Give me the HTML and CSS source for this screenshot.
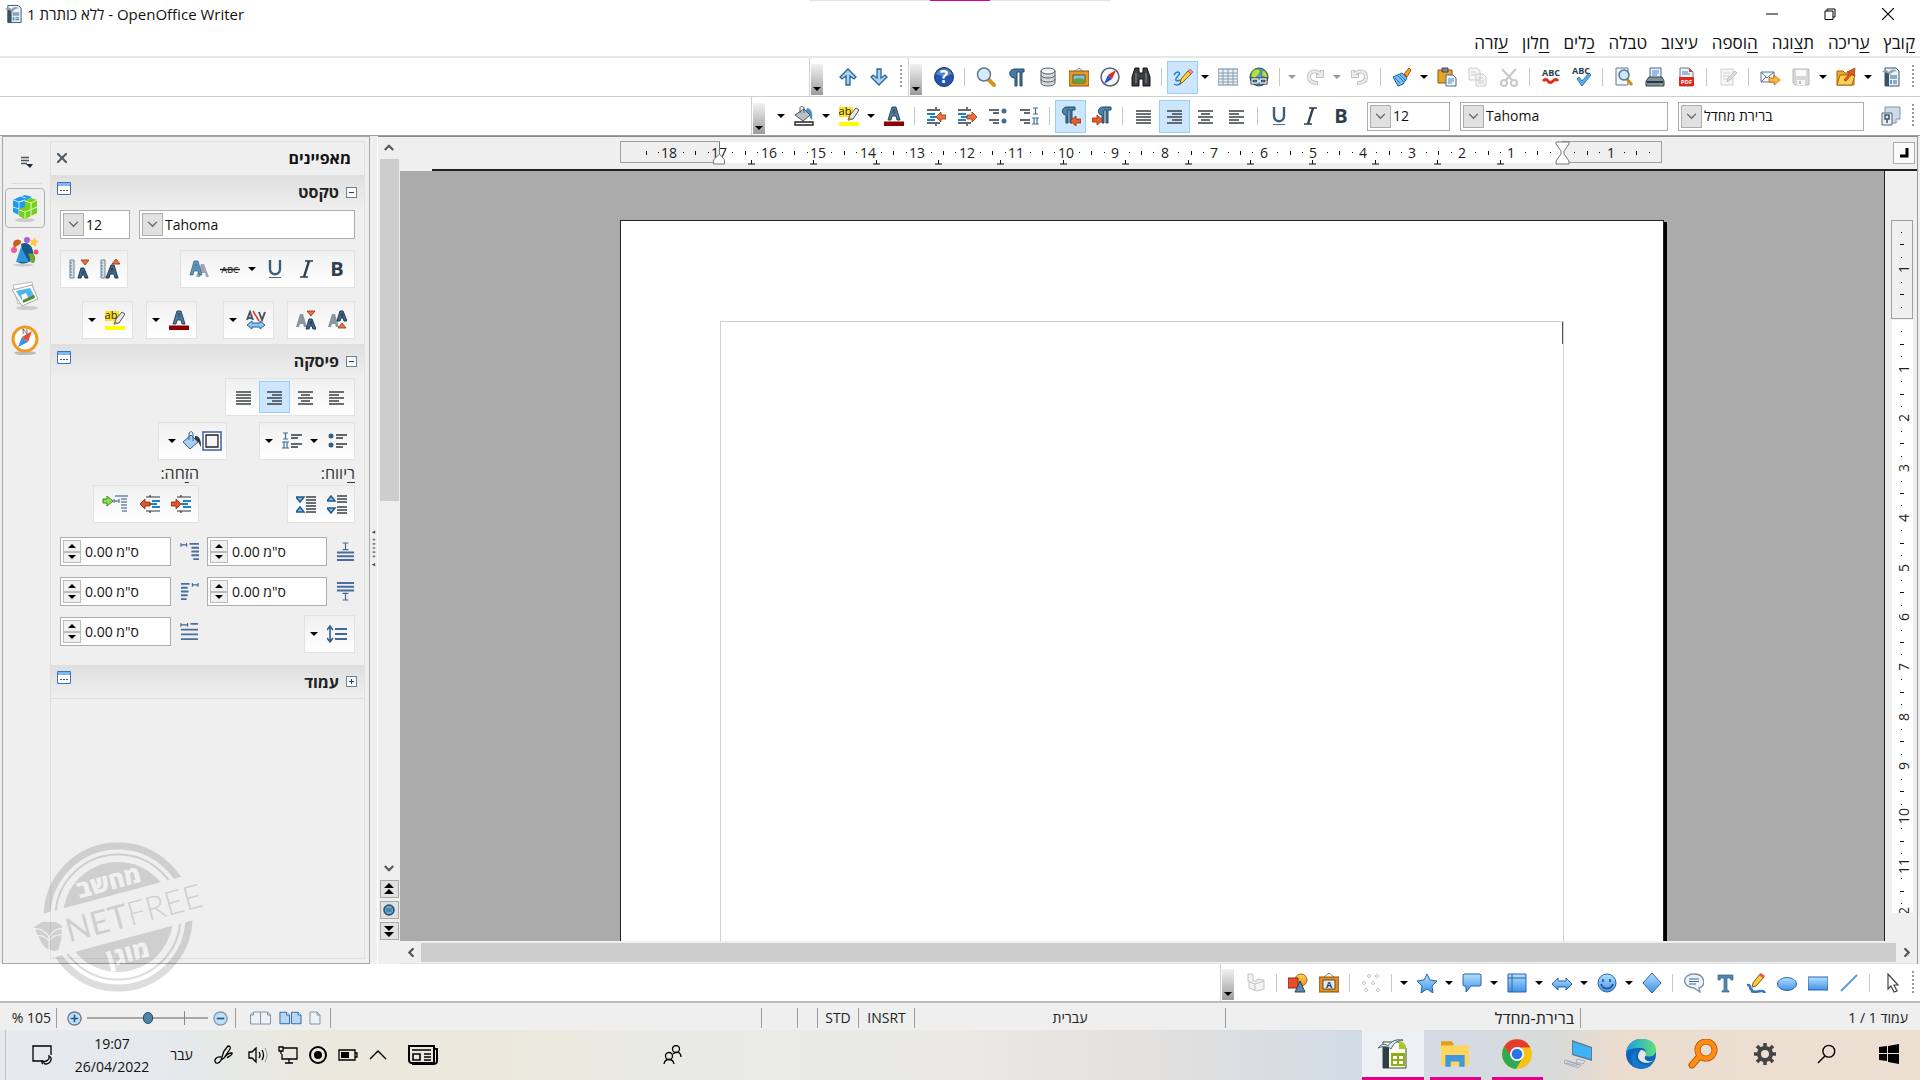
FILE: index.html
```html
<!DOCTYPE html>
<html lang="he" dir="rtl">

<head>
  <meta charset="UTF-8">
  <meta name="viewport" content="width=device-width, initial-scale=1.0">
  <title>ללא כותרת 1 - OpenOffice Writer</title>
  <link rel="stylesheet" href="styles.css">
</head>

<body>
  <!-- gradients stay out of the hidden sprite, they do not paint from there -->
  <svg class="gradients" width="0" height="0" aria-hidden="true">
    <defs>
      <linearGradient id="gBlue" x1="0" y1="0" x2="0" y2="1"><stop offset="0" stop-color="#b5e0ff"/><stop offset="1" stop-color="#3f93e6"/></linearGradient>
      <linearGradient id="gOrange" x1="0" y1="0" x2="0" y2="1"><stop offset="0" stop-color="#ffd45a"/><stop offset="1" stop-color="#e8901a"/></linearGradient>
      <linearGradient id="gEdge" x1="0" y1="0" x2="1" y2="0"><stop offset="0" stop-color="#1b9de2"/><stop offset="1" stop-color="#5fe07a"/></linearGradient>
    </defs>
  </svg>

  <!-- icon sprite -->
  <svg class="sprite" aria-hidden="true">
    <symbol id="writer" viewBox="0 0 20 20"><path d="M4 1h11l3 3v15H4z" fill="#eef3f7" stroke="#3a5266"/><path d="M4 5h4v14H4z" fill="#3a5266"/><path d="M1 5c3-3 5-2 7 0 2-3 5-3 8-1-3 0-5 1-7 4C7 6 4 5 1 5z" fill="#8fa5b5"/><path d="M9 9h7M9 11h7M12 14h4M12 16h4" stroke="#2f5f93"/><path d="M9 13h2v4H9z" fill="#5f9bd0"/></symbol>
    <symbol id="open" viewBox="0 0 20 20"><path d="M1 4h6l2 2h9v12H1z" fill="#f0a92b" stroke="#a8650c"/><path d="M1 18 4 8h15l-3 10z" fill="#ffd058" stroke="#a8650c"/><path d="M8 13l6-7-3-1 8-4-1 8-2-2-6 7z" fill="#e8591f" stroke="#9c2d08" stroke-width=".7"/></symbol>
    <symbol id="save" viewBox="0 0 20 20"><path d="M2 2h16v16H4l-2-2z" fill="#d7d7d7" stroke="#bbb"/><path d="M5 3h10v6H5zM6 13h8v5H6z" fill="#fafafa"/><path d="M8 14h2v3H8z" fill="#bbb"/></symbol>
    <symbol id="mail" viewBox="0 0 20 20"><path d="M1 5h13v10H1z" fill="#f3f6fa" stroke="#5d748a"/><path d="M1 5l6 6 7-6M1 15l5-5M14 15l-5-5" fill="none" stroke="#5d748a"/><path d="M9 11h5V8l6 5-6 5v-3H9z" fill="#ffb640" stroke="#b9660c" stroke-width=".8"/></symbol>
    <symbol id="edit" viewBox="0 0 20 20"><path d="M3 2h12v16H3z" fill="#f6f6f6" stroke="#d0d0d0"/><path d="M5 6h7M5 9h6M5 12h4" stroke="#d0d0d0"/><path d="M9 15l1-4 7-7 2 2-7 7z" fill="#dedede" stroke="#c0c0c0"/></symbol>
    <symbol id="pdf" viewBox="0 0 20 20"><path d="M4 1h9l4 4v14H4z" fill="#eaf1f7" stroke="#5f7d97"/><path d="M6 5h6M6 7h8" stroke="#4d84b5"/><path d="M13 1v4h4z" fill="#e23d2e"/><path d="M3 10h15v9H3z" fill="#e2261c"/><text x="10.500" y="17" class="i-pdf">PDF</text></symbol>
    <symbol id="print" viewBox="0 0 20 20"><path d="M5 1h11v10H5z" fill="#e6f1fb" stroke="#41648a"/><path d="M7 4h7M7 6h7M7 8h5" stroke="#4b8ad0"/><path d="M1 14l3-4h13l2 4v5H1z" fill="#82909c" stroke="#37424c"/><path d="M2 14h16v2H2z" fill="#2c3640"/><circle cx="16" cy="17.500" r="1" fill="#62e03c"/></symbol>
    <symbol id="preview" viewBox="0 0 20 20"><path d="M2 1h12v17H2z" fill="#f2f6fa" stroke="#5b7d9e"/><path d="M12 11l6 7" stroke="#c88a20" stroke-width="3"/><circle cx="10" cy="8" r="5" fill="#cde7fa" stroke="#56748d" stroke-width="1.500"/></symbol>
    <symbol id="abccheck" viewBox="0 0 20 20"><text x="9" y="7" class="i-abc">ABC</text><path d="M5 12l2-2 3 4 7-8 2 2-9 11z" fill="#57aef0" stroke="#1c5f9f" stroke-width=".8"/></symbol>
    <symbol id="abcwave" viewBox="0 0 20 20"><text x="10" y="9" class="i-abc">ABC</text><path d="M2 14q3-3 5 0t5 0 5 0" fill="none" stroke="#e62c17" stroke-width="3"/></symbol>
    <symbol id="cut" viewBox="0 0 20 20"><path d="M3 2l11 12M17 2L6 14" stroke="#c9c9c9" stroke-width="2"/><circle cx="5" cy="16" r="3" fill="none" stroke="#c9c9c9" stroke-width="2"/><circle cx="15" cy="16" r="3" fill="none" stroke="#c9c9c9" stroke-width="2"/></symbol>
    <symbol id="copy" viewBox="0 0 20 20"><path d="M1 1h8l3 3v9H1zM8 7h7l3 3v9H8z" fill="#f5f5f5" stroke="#ccc"/><path d="M3 5h5M3 8h5M10 11h5M10 14h6M10 16h6" stroke="#ccc"/></symbol>
    <symbol id="paste" viewBox="0 0 20 20"><path d="M1 3h14v13H1z" fill="#e9a52a" stroke="#8a5a0c"/><path d="M5 1h6v4H5z" fill="#808890" stroke="#444"/><path d="M9 8h7l3 3v8H9z" fill="#f0f6fb" stroke="#4a6a88"/><path d="M11 12h6M11 14h6M11 16h4" stroke="#4a86bd"/></symbol>
    <symbol id="brush" viewBox="0 0 20 20"><path d="M12 7l5-6 2 2-4 7z" fill="#f2a326" stroke="#9b5c0a"/><path d="M1 10l9-4 5 5-4 6-5 2z" fill="#79bdf2" stroke="#1f5c98"/><path d="M3 11l5 5M6 9l6 6M8 8l5 5" stroke="#2e75b8"/></symbol>
    <symbol id="undo" viewBox="0 0 20 20"><path d="M3 3v6h6M4 8c3-5 12-5 12 2 0 6-6 6-9 6" fill="none" stroke="#c4c4c4" stroke-width="4"/><path d="M3 4v5h5M4 8c3-5 12-5 12 2 0 6-6 6-8 6" fill="none" stroke="#ededed" stroke-width="2"/></symbol>
    <symbol id="redo" viewBox="0 0 20 20"><path d="M17 3v6h-6M16 8C13 3 4 3 4 10c0 6 6 6 9 6" fill="none" stroke="#c4c4c4" stroke-width="4"/><path d="M17 4v5h-5M16 8C13 3 4 3 4 10c0 6 6 6 8 6" fill="none" stroke="#ededed" stroke-width="2"/></symbol>
    <symbol id="globe" viewBox="0 0 20 20"><circle cx="10" cy="10" r="9" fill="#4c9bd6" stroke="#224f75"/><path d="M3 5c3-4 9-4 8 0S8 8 7 11 2 9 2 9zM13 3c4 1 6 5 5 8l-5-2z" fill="#b9dc44" stroke="#547c1b" stroke-width=".6"/><path d="M3 12h6v4H3zM11 12h6v4h-6z" fill="none" stroke="#26323c" stroke-width="3"/><path d="M3 12h6v4H3zM11 12h6v4h-6zM8 14h4" fill="none" stroke="#e8edf0" stroke-width="1.300"/></symbol>
    <symbol id="table" viewBox="0 0 20 20"><path d="M0 2h20v16H0z" fill="#e9f0f6" stroke="#73869a"/><path d="M0 6h20M0 9h20M0 12h20M0 15h20M5 2v16M10 2v16M15 2v16" stroke="#8b9cae"/></symbol>
    <symbol id="draw" viewBox="0 0 20 20"><path d="M1 8c3-5 8-3 4 1s-2 6 2 4M1 17c3 2 5 1 7-1" fill="none" stroke="#2c7cd2" stroke-width="1.500"/><path d="M7 17l1-5 7-8 3 3-8 8z" fill="#ffd33f" stroke="#7e5b0e"/><path d="M15 4l2-2 3 3-2 2z" fill="#f28b9c" stroke="#9f4052" stroke-width=".6"/></symbol>
    <symbol id="find" viewBox="0 0 20 20"><path d="M4 1h4v5h4V1h4l3 9v9h-7v-7H8v7H1v-9z" fill="#3b3f43" stroke="#111"/><path d="M5 6v10M15 6v10" stroke="#8a9096"/></symbol>
    <symbol id="compass" viewBox="0 0 20 20"><circle cx="10" cy="10" r="9" fill="#f4f6f8" stroke="#58656f" stroke-width="1.500"/><path d="M4 17l4-9 4 4z" fill="#1c4fd8"/><path d="M16 3l-4 9-4-4z" fill="#e5271a"/></symbol>
    <symbol id="picture" viewBox="0 0 20 20"><path d="M5 5l5-4 5 4" fill="none" stroke="#888"/><path d="M0 4h20v15H0z" fill="#e09a28" stroke="#8c5107"/><path d="M4 8h12v8H4z" fill="#7ec3f3" stroke="#7a4a06"/><path d="M4 13q5-4 12 0v3H4z" fill="#5da43a"/></symbol>
    <symbol id="db" viewBox="0 0 20 20"><path d="M3 4v12c0 4 14 4 14 0V4z" fill="#d6dade" stroke="#555e66"/><ellipse cx="10" cy="4" rx="7" ry="3" fill="#f5f6f7" stroke="#555e66"/><path d="M3 8c0 4 14 4 14 0M3 12c0 4 14 4 14 0" fill="none" stroke="#555e66"/></symbol>
    <symbol id="pilcrow" viewBox="0 0 20 20"><path d="M17 2H8C1 2 1 11 8 11v8h2V5h3v14h2V5h2z" fill="#467aa0" stroke="#1f4765"/></symbol>
    <symbol id="zoom" viewBox="0 0 20 20"><path d="M12 12l6 6" stroke="#d99522" stroke-width="4" stroke-linecap="round"/><circle cx="8" cy="7.500" r="6.500" fill="#d5ebfb" stroke="#62798c" stroke-width="1.500"/></symbol>
    <symbol id="help" viewBox="0 0 20 20"><circle cx="10" cy="10" r="9.500" fill="#2356a8" stroke="#163b7c"/><path d="M2 7a9 9 0 0 1 16 0q-8 4-16 0z" fill="#7da5de" opacity=".6"/><text x="10" y="16" class="i-help">?</text></symbol>
    <symbol id="down" viewBox="0 0 20 20"><path d="M8 2h4v9l4-3 2 2-8 8-8-8 2-2 4 3z" fill="#a5d3f5" stroke="#2c6391" stroke-width="1.300"/></symbol>
    <symbol id="up" viewBox="0 0 20 20"><path d="M8 18h4V9l4 3 2-2-8-8-8 8 2 2 4-3z" fill="#a5d3f5" stroke="#2c6391" stroke-width="1.300"/></symbol>
    <symbol id="styles" viewBox="0 0 20 20"><path d="M4 1h15v12l-4 4H4z" fill="#cfdbe6" stroke="#8296a8"/><path d="M15 17v-4h4" fill="#fff" stroke="#8296a8"/><path d="M1 7h10v12H1z" fill="#e9eef2" stroke="#4f6579"/><path d="M4 9h4v4H4zM6 13v4" fill="none" stroke="#3e5569" stroke-width="1.500"/></symbol>
    <symbol id="bold" viewBox="0 0 20 20"><text x="10" y="17" class="i-b">B</text></symbol>
    <symbol id="italic" viewBox="0 0 20 20"><path d="M9 2h8M4 18h8" stroke="#2c3e50" stroke-width="1.500"/><path d="M13 2L8 18" stroke="#2c3e50" stroke-width="2.500"/></symbol>
    <symbol id="underline" viewBox="0 0 20 20"><path d="M5 1v9c0 7 10 7 10 0V1" fill="none" stroke="#3f5f7c" stroke-width="2.400"/><path d="M4 18.500h12" stroke="#5a6671"/></symbol>
    <symbol id="al" viewBox="0 0 20 20"><path d="M2 5h15M2 8h10M2 11h15M2 14h10M2 17h15" stroke="#3b4146" stroke-width="1.400"/></symbol>
    <symbol id="ac" viewBox="0 0 20 20"><path d="M2 5h15M5 8h9M2 11h15M5 14h9M2 17h15" stroke="#3b4146" stroke-width="1.400"/></symbol>
    <symbol id="ar" viewBox="0 0 20 20"><path d="M2 5h15M7 8h10M2 11h15M7 14h10M2 17h15" stroke="#3b4146" stroke-width="1.400"/></symbol>
    <symbol id="aj" viewBox="0 0 20 20"><path d="M2 5h15M2 8h15M2 11h15M2 14h15M2 17h15" stroke="#3b4146" stroke-width="1.400"/></symbol>
    <symbol id="ltr" viewBox="0 0 20 20"><path d="M19 1h-8C5 1 5 9 10 9v8h2V4h2v13h2V4h3z" fill="#4b81a8" stroke="#1f4765"/><path d="M0 12h5V9l6 5-6 5v-3H0z" fill="#e8602c" stroke="#8b2b0a" stroke-width=".8"/></symbol>
    <symbol id="rtl" viewBox="0 0 20 20"><path d="M14 1H6C0 1 0 9 5 9v8h2V4h2v13h2V4h3z" fill="#4b81a8" stroke="#1f4765"/><path d="M20 13h-5v-3l-6 5 6 5v-3h5z" fill="#e8602c" stroke="#8b2b0a" stroke-width=".8"/></symbol>
    <symbol id="numr" viewBox="0 0 20 20"><path d="M1 4h10M5 7h6M1 14h10M5 17h6" stroke="#33383c" stroke-width="1.400"/><path d="M14 2h5M14 8h5M16.500 2v6M13 12h7M13 18h7M15 12v6M18 12v6" stroke="#3d7096" stroke-width="1.200"/></symbol>
    <symbol id="bulr" viewBox="0 0 20 20"><path d="M1 4h10M5 7h6M1 14h10M5 17h6" stroke="#33383c" stroke-width="1.400"/><circle cx="16" cy="5" r="2.500" fill="#3d7096"/><circle cx="16" cy="15" r="2.500" fill="#3d7096"/></symbol>
    <symbol id="numl" viewBox="0 0 20 20"><path d="M9 4h11M9 7h7M9 13h11M9 16h7" stroke="#33383c" stroke-width="1.400"/><path d="M1 2h5M1 8h5M3.500 2v6M0 11h7M0 17h7M2 11v6M5 11v6" stroke="#3d7096" stroke-width="1.200"/></symbol>
    <symbol id="bull" viewBox="0 0 20 20"><path d="M9 4h11M9 7h7M9 13h11M9 16h7" stroke="#33383c" stroke-width="1.400"/><circle cx="4" cy="5" r="2.500" fill="#2f6186"/><circle cx="4" cy="14" r="2.500" fill="#2f6186"/></symbol>
    <symbol id="indout" viewBox="0 0 20 20"><path d="M1 4h13M1 17h13M10 1v2M10 18v2" stroke="#33383c" stroke-width="1.400"/><path d="M1 8h8M4 11h6M1 14h8" stroke="#2080c8" stroke-width="2"/><path d="M10 11l5-5v3h5v4h-5v3z" fill="#f0713a" stroke="#932e0c" stroke-width=".8"/></symbol>
    <symbol id="indin" viewBox="0 0 20 20"><path d="M1 4h13M1 17h13M10 1v2M10 18v2" stroke="#33383c" stroke-width="1.400"/><path d="M1 8h8M4 11h6M1 14h8" stroke="#2080c8" stroke-width="2"/><path d="M20 11l-5-5v3h-5v4h5v3z" fill="#f0713a" stroke="#932e0c" stroke-width=".8"/></symbol>
    <symbol id="fontcolor" viewBox="0 0 20 20"><path d="M4 14L8 1h4l4 13h-3l-1-4H8l-1 4zM9 7h2l-1-4z" fill="#4d7da4" stroke="#243b50" stroke-width=".9"/><path d="M0 15.500h20v4.500H0z" fill="#8b0000"/></symbol>
    <symbol id="highlight" viewBox="0 0 20 20"><path d="M0 1h14v10H0z" fill="#ffe11a"/><text x="6" y="9" class="i-ab">ab</text><path d="M9 14l2-5 6-7 3 2-6 9z" fill="#e6e9ec" stroke="#555"/><path d="M9 15l1-4 3 2z" fill="#b38e1c"/><path d="M0 16h20v4H0z" fill="#ff0"/></symbol>
    <symbol id="bucket" viewBox="0 0 20 20"><path d="M13 2c5 1 6 5 5 12-3-2-2-7-6-9z" fill="#4a90c2"/><path d="M1 9l9-6 6 6-7 6z" fill="#b8c2ca" stroke="#4b5761"/><path d="M6 7V2c0-2 4-2 4 0v5" fill="none" stroke="#4b5761"/><path d="M1 16h18v3H1z" fill="#fff" stroke="#222" stroke-width="1.400"/></symbol>
    <symbol id="bucketsmall" viewBox="0 0 20 20"><path d="M13 5c5 0 6 4 6 11-2-3-2-6-6-7z" fill="#333"/><path d="M1 11l8-7 7 7-8 7z" fill="#a9cdf2" stroke="#2f5f93"/><path d="M7 9V3c0-3 4-3 4 0v7" fill="none" stroke="#2f5f93"/></symbol>
    <symbol id="box" viewBox="0 0 20 20"><path d="M1 1h18v18H1z" fill="#fff" stroke="#3e5f9c" stroke-width="1.500"/><path d="M4 4h12v12H4z" fill="#f5f5f5" stroke="#222" stroke-width="1.300"/></symbol>
    <symbol id="shadow" viewBox="0 0 20 20"><path d="M7 18l5-13h3l5 13h-3l-1-4h-4l-1 4z" fill="#9da6ae"/><path d="M1 16L5 2h4l4 14h-3l-1-4H5l-1 4zM6 9h2L7 5z" fill="#5b95bd" stroke="#33617f" stroke-width=".7"/></symbol>
    <symbol id="strike" viewBox="0 0 20 20"><text x="10" y="14" class="i-strike">ABC</text><path d="M0 10.500h20" stroke="#222" stroke-width="1.400"/></symbol>
    <symbol id="grow" viewBox="0 0 20 20"><path d="M1 1h4v18H1z" fill="#d5dfe8" stroke="#6f8496"/><path d="M1 4h2M1 7h2M1 10h2M1 13h2M1 16h2" stroke="#6f8496"/><path d="M6 19l5-13h3l4 13h-3l-1-4h-4l-1 4zM11 12h2l-1-3z" fill="#40698c" stroke="#22394e"/><path d="M12 5l4-5 4 5z" fill="#f0713a" stroke="#932e0c" stroke-width=".8"/></symbol>
    <symbol id="shrink" viewBox="0 0 20 20"><path d="M1 1h4v18H1z" fill="#d5dfe8" stroke="#6f8496"/><path d="M1 4h2M1 7h2M1 10h2M1 13h2M1 16h2" stroke="#6f8496"/><path d="M9 19l3-10h3l4 10h-3l-1-3h-2l-1 3zM13 14h2l-1-2z" fill="#40698c" stroke="#22394e"/><path d="M12 1h8l-4 5z" fill="#f0713a" stroke="#932e0c" stroke-width=".8"/></symbol>
    <symbol id="super" viewBox="0 0 20 20"><path d="M1 17L5 4h3l4 13H9l-1-3H5l-1 3z" fill="#8e979f"/><path d="M10 11l3-10h3l4 10h-3l-1-3h-2l-1 3zM14 6h2l-1-3z" fill="#40698c" stroke="#22394e"/><path d="M11 18l4-5 4 5z" fill="#f0713a" stroke="#932e0c" stroke-width=".8"/></symbol>
    <symbol id="sub" viewBox="0 0 20 20"><path d="M0 17L4 4h3l4 13H8l-1-3H4l-1 3z" fill="#8e979f"/><path d="M10 19l3-10h3l4 10h-3l-1-3h-2l-1 3zM14 14h2l-1-3z" fill="#40698c" stroke="#22394e"/><path d="M11 1h8l-4 5z" fill="#f0713a" stroke="#932e0c" stroke-width=".8"/></symbol>
    <symbol id="spacing" viewBox="0 0 20 20"><path d="M1 10l3-8 3 8M2 8h4M13 2l3 8 3-8" fill="none" stroke="#4a5967" stroke-width="2"/><path d="M7 1l6 10" stroke="#e23228" stroke-width="1.500"/><path d="M1 15l5-4v2h8v-2l5 4-5 4v-2H6v2z" fill="#8cc6f2" stroke="#27629a"/></symbol>
    <symbol id="paraup" viewBox="0 0 20 20"><path d="M10 2h10M10 5h10M10 8h10M10 13h10M10 16h10M10 19h10" stroke="#3b4146" stroke-width="1.400"/><path d="M0 7l4-5 4 5zM0 14h8l-4 5z" fill="#7cc0f2" stroke="#225a87" stroke-width="1.500"/></symbol>
    <symbol id="paradn" viewBox="0 0 20 20"><path d="M10 3h10M10 6h10M10 9h10M10 12h10M10 15h10M10 18h10" stroke="#3b4146" stroke-width="1.400"/><path d="M0 3h8L4 8zM0 18l4-5 4 5z" fill="#7cc0f2" stroke="#225a87" stroke-width="1.500"/></symbol>
    <symbol id="inc" viewBox="0 0 20 20"><path d="M6 3h14M6 17h14M10 1v2M10 17v2" stroke="#33383c" stroke-width="1.200"/><path d="M12 7h8M10 10h7M12 13h8" stroke="#2080c8" stroke-width="2"/><path d="M10 10L5 5v3H0v4h5v3z" fill="#e0552a" stroke="#8a2a0a" stroke-width=".8"/></symbol>
    <symbol id="dec" viewBox="0 0 20 20"><path d="M6 3h14M6 17h14M10 1v2M10 17v2" stroke="#33383c" stroke-width="1.200"/><path d="M12 7h8M10 10h7M12 13h8" stroke="#2080c8" stroke-width="2"/><path d="M0 10l5-5v3h5v4H5v3z" fill="#e0552a" stroke="#8a2a0a" stroke-width=".8"/></symbol>
    <symbol id="hang" viewBox="0 0 26 20"><path d="M1 5h4V2l6 5-6 5V9H1z" fill="#8fdc55" stroke="#3f8717"/><path d="M12 5v4M17 5v4M12 7h5M13 2h13M19 5h6M19 8h6M19 11h6M19 14h6M20 17h5" stroke="#6b86a8" stroke-width="1.400"/></symbol>
    <symbol id="sabove" viewBox="0 0 20 20"><path d="M7 1h6M7 8h6M10 1v7" stroke="#44658f" stroke-width="1.200"/><path d="M1 11h18M1 15h18M1 19h18" stroke="#4a6c9f" stroke-width="2"/></symbol>
    <symbol id="sbelow" viewBox="0 0 20 20"><path d="M7 12h6M7 19h6M10 12v7" stroke="#44658f" stroke-width="1.200"/><path d="M1 1h18M1 5h18M1 9h18" stroke="#4a6c9f" stroke-width="2"/></symbol>
    <symbol id="ibefore" viewBox="0 0 20 20"><path d="M1 1v4M7 1v4M1 3h6" stroke="#44658f" stroke-width="1.200"/><path d="M10 2h10M12 6h8M12 10h8M12 14h8M14 18h6" stroke="#4a6c9f" stroke-width="2"/></symbol>
    <symbol id="iafter" viewBox="0 0 20 20"><path d="M13 1v4M19 1v4M13 3h6" stroke="#44658f" stroke-width="1.200"/><path d="M1 2h9M1 6h7M1 10h8M1 14h7M1 18h6" stroke="#4a6c9f" stroke-width="2"/></symbol>
    <symbol id="ifirst" viewBox="0 0 20 20"><path d="M1 1v4M8 1v4M1 3h7" stroke="#44658f" stroke-width="1.200"/><path d="M11 2h8M1 8h18M1 13h18M1 18h18" stroke="#4a6c9f" stroke-width="2"/></symbol>
    <symbol id="linesp" viewBox="0 0 20 20"><path d="M3 3v14M0 6l3-4 3 4M0 14l3 4 3-4" fill="none" stroke="#2f5f8f" stroke-width="1.600"/><path d="M8 5h12M8 10h12M8 15h12" stroke="#3e6a9c" stroke-width="2"/></symbol>
    <symbol id="panel" viewBox="0 0 14 13"><path d="M.5.5h13v12H.5z" fill="#fff" stroke="#3e73bd"/><path d="M1 1h12v3H1z" fill="#86b6ec"/><path d="M3 8h2v1H3zM6 8h2v1H6zM9 8h2v1H9z" fill="#3d5a80"/></symbol>
    <symbol id="cubes" viewBox="0 0 28 30"><ellipse cx="14" cy="27" rx="10" ry="2" fill="#ccc"/><path d="M2 7l6-3 6-2 7 2-7 4v7l-4 3v5l-8-4z" fill="#2299f0"/><path d="M2 7l6 2 6-2M8 9v13M2 14l6 2M9 3l6 2M8 9l6-2" fill="none" stroke="#bfe6ff"/><path d="M14 8l6-3 6 2v13l-6 3-6 3-6-3v-7l6-2z" fill="#76d01a"/><path d="M14 8l6 2 6-3M20 10v13M8 17l6 2 12-5M14 19v7" fill="none" stroke="#e3ffc4"/></symbol>
    <symbol id="clip" viewBox="0 0 28 30"><ellipse cx="12" cy="28" rx="10" ry="1.500" fill="#ccc"/><path d="M10 7c8-4 14 4 12 15-6 6-12 5-16 3 4-3 6-8 4-18z" fill="#145a8c"/><path d="M10 10l8 15H5z" fill="#2f93da"/><path d="M2 6c2-5 8-4 8-1S4 9 3 12z" fill="#c8601a"/><path d="M17 17c7-2 9 4 6 9-6 1-2-5-6-9z" fill="#72a832"/><circle cx="16" cy="3" r="3" fill="#b25be0"/><path d="M24 0l1 3 3 1-3 2v4l-3-2-3 1 1-4-2-2h4z" fill="#ffc94a"/><circle cx="3" cy="13" r="3" fill="#f05b9c"/><circle cx="25" cy="15" r="2.500" fill="#ee5066"/></symbol>
    <symbol id="gallery" viewBox="0 0 28 30"><ellipse cx="16" cy="27" rx="11" ry="2" fill="#ccc"/><path d="M2 4l19-3 3 18-17 4z" fill="#fff" stroke="#bbb"/><path d="M1 9l20-5 6 14-16 7z" fill="#fafafa" stroke="#aaa"/><path d="M5 10l14-3 5 9-12 5z" fill="#4fb5ee"/><path d="M10 14l5-2 3 6-6 3z" fill="#f7f7f7"/><path d="M12 19l11-5 1 3-12 5z" fill="#5d8a25"/></symbol>
    <symbol id="nav" viewBox="0 0 28 30"><ellipse cx="14" cy="28" rx="11" ry="2" fill="#bbb"/><circle cx="14" cy="14" r="12" fill="#fff" stroke="#f09a25" stroke-width="3"/><text x="14" y="9" class="i-n">N</text><path d="M21 6l-4 11-6-5z" fill="#ee4a2c"/><path d="M7 22l4-10 6 5z" fill="#3a93e0"/></symbol>
    <symbol id="cursor" viewBox="0 0 20 20"><path d="M7 1v15l3-3 3 6 3-1-3-6h4z" fill="#fff" stroke="#444" stroke-width="1.200"/></symbol>
    <symbol id="line" viewBox="0 0 20 20"><path d="M2 18L18 2" stroke="#5a9ee0" stroke-width="2"/></symbol>
    <symbol id="rect" viewBox="0 0 20 20"><path d="M0 4h20v13H0z" fill="url(#gBlue)" stroke="#2b62a8"/></symbol>
    <symbol id="ellipse" viewBox="0 0 20 20"><ellipse cx="10" cy="11" rx="9.500" ry="6.500" fill="url(#gBlue)" stroke="#2b62a8"/></symbol>
    <symbol id="freeform" viewBox="0 0 20 20"><path d="M5 18c7 3 12-3 14 2M1 12c5-1 1 5 6 5" fill="none" stroke="#3477bd" stroke-width="2.500"/><path d="M6 14l1-4 7-9 4 3-8 9z" fill="#ffc93c" stroke="#7e5b0e"/><path d="M13 2l2-2 4 3-2 2z" fill="#e5564c"/></symbol>
    <symbol id="text" viewBox="0 0 20 20"><path d="M3 2h15v5h-2l-1-2h-3v12l2 1v1H7v-1l2-1V5H6L5 7H3z" fill="#5487ad" stroke="#31617f" stroke-width=".7"/></symbol>
    <symbol id="callout" viewBox="0 0 20 20"><path d="M10 1c12 0 12 13 5 14l1 4-6-4C-3 14-2 1 10 1z" fill="#eaf2fa" stroke="#8496a6" stroke-width="1.400"/><path d="M5 6h10M5 8.500h10M5 11h7" stroke="#4a6c8f"/></symbol>
    <symbol id="diamond" viewBox="0 0 20 20"><path d="M10 0l9 10-9 10-9-10z" fill="url(#gBlue)" stroke="#2b62a8"/></symbol>
    <symbol id="smiley" viewBox="0 0 20 20"><circle cx="10" cy="10" r="9" fill="url(#gBlue)" stroke="#2b62a8"/><path d="M6 6v3M13 6v3M4 11c2 6 10 6 12 0" fill="none" stroke="#1f4d86" stroke-width="1.500"/></symbol>
    <symbol id="arrows" viewBox="0 0 20 20"><path d="M0 11l6-6v3h8V5l6 6-6 6v-3H6v3z" fill="url(#gBlue)" stroke="#2b62a8"/></symbol>
    <symbol id="flow" viewBox="0 0 20 20"><path d="M1 1h18v18H1z" fill="url(#gBlue)" stroke="#2b62a8"/><path d="M5 1v18M1 5h18" stroke="#2b62a8"/></symbol>
    <symbol id="bubble" viewBox="0 0 20 20"><path d="M2 1h16l1 1v10l-1 1H9l-5 6v-6H2l-1-1V2z" fill="url(#gBlue)" stroke="#2b62a8"/></symbol>
    <symbol id="star" viewBox="0 0 20 20"><path d="M10 1l3 6 7 1-5 5 1 7-6-4-6 4 1-7-5-5 7-1z" fill="url(#gBlue)" stroke="#2b62a8"/></symbol>
    <symbol id="points" viewBox="0 0 20 20"><path d="M8 1l2 2-2 2-2-2zM16 1l2 2-2 2-2-2zM3 8l2 2-2 2-2-2zM12 8l2 2-2 2-2-2zM5 15l2 2-2 2-2-2zM17 15l2 2-2 2-2-2z" fill="#eee" stroke="#ccc"/></symbol>
    <symbol id="fontwork" viewBox="0 0 20 20"><path d="M5 4l5-4 5 4" fill="none" stroke="#888"/><path d="M0 4h20v15H0z" fill="#d98e2b" stroke="#8c5107"/><path d="M4 7h12v9H4z" fill="#dcebf7" stroke="#7a4a06"/><text x="10" y="15" class="i-fw">A</text></symbol>
    <symbol id="fromfile" viewBox="0 0 20 20"><circle cx="13" cy="7" r="6" fill="url(#gOrange)" stroke="#a8650c"/><path d="M0 5h10v10H0z" fill="#e5502a" stroke="#8b2b0a"/><path d="M12 8l5 11H7z" fill="#5d86ab" stroke="#28455f"/></symbol>
    <symbol id="extrude" viewBox="0 0 20 20"><path d="M2 1h5v7h4V6l7 1v9l-7 2-8-3V8H2z" fill="#f2f2f2" stroke="#c4c4c4"/><path d="M3 9l6 2 9-3M9 11v7" fill="none" stroke="#c4c4c4"/></symbol>
    <symbol id="chev" viewBox="0 0 12 8"><path d="M1 1l5 5 5-5" fill="none" stroke="#666" stroke-width="1.600"/></symbol>
    <symbol id="chevbold" viewBox="0 0 12 8"><path d="M1 1l5 5 5-5" fill="none" stroke="#555" stroke-width="2.600"/></symbol>
    <symbol id="zin" viewBox="0 0 16 16"><circle cx="8" cy="8" r="7" fill="#bfe0fa" stroke="#6e7f90" stroke-width="1.500"/><path d="M4 8h8M8 4v8" stroke="#1d5b92" stroke-width="1.800"/></symbol>
    <symbol id="zout" viewBox="0 0 16 16"><circle cx="8" cy="8" r="7" fill="#bfe0fa" stroke="#8a9aa9" stroke-width="1.500"/><path d="M4 8h8" stroke="#1d5b92" stroke-width="1.800"/></symbol>
    <symbol id="v1" viewBox="0 0 12 14"><path d="M1 1h7l3 3v9H1z" fill="#eef2f6" stroke="#8294a5"/><path d="M8 1v3h3" fill="none" stroke="#8294a5"/></symbol>
    <symbol id="v2" viewBox="0 0 24 14"><path d="M1 1h7l3 3v9H1zM13 1h7l3 3v9H13z" fill="#b9d7f5" stroke="#2e66a8"/><path d="M8 1v3h3M20 1v3h3" fill="#fff" stroke="#2e66a8"/></symbol>
    <symbol id="v3" viewBox="0 0 22 14"><path d="M4 1h7v12H1V4zM11 1h7l3 3v9H11z" fill="#eef2f6" stroke="#8294a5"/><path d="M4 1v3H1M18 1v3h3" fill="none" stroke="#8294a5"/></symbol>
    <!-- taskbar -->
    <symbol id="win" viewBox="0 0 20 20"><path d="M0 3l8-1v7H0zM9 2l11-2v9H9zM0 10h8v7l-8-1zM9 10h11v10L9 18z" fill="#000"/></symbol>
    <symbol id="tsearch" viewBox="0 0 22 22"><circle cx="13" cy="8" r="6.500" fill="none" stroke="#000" stroke-width="1.500"/><path d="M9 13l-8 8" stroke="#000" stroke-width="1.500"/></symbol>
    <symbol id="gear" viewBox="0 0 24 24"><circle cx="12" cy="12" r="6" fill="none" stroke="#444" stroke-width="4"/><path d="M12 1v5M12 18v5M1 12h5M18 12h5M4 4l4 4M16 16l4 4M20 4l-4 4M8 16l-4 4" stroke="#444" stroke-width="3.500"/></symbol>
    <symbol id="osearch" viewBox="0 0 30 30"><path d="M11 18l-7 8" stroke="#b35405" stroke-width="7" stroke-linecap="round"/><circle cx="18" cy="11" r="8.500" fill="none" stroke="#b35405" stroke-width="6"/><path d="M11 18l-7 8" stroke="#ff8a14" stroke-width="5" stroke-linecap="round"/><circle cx="18" cy="11" r="8.500" fill="none" stroke="#ff8a14" stroke-width="4.500"/></symbol>
    <symbol id="edge" viewBox="0 0 30 30"><circle cx="15" cy="15" r="15" fill="#0f64b8"/><path d="M0 14C2-5 30-4 30 11c0 7-8 8-11 5 2-4 0-7-4-7C9 9 2 9 0 14z" fill="url(#gEdge)"/><path d="M11 12c-4 8 2 16 15 13-4 6-14 6-19 1-3-5-2-12 4-14z" fill="#1478cc"/><path d="M15 11c5 0 6 4 4 7s5 6 9 3c-5 5-15 3-16-3 0-3 1-5 3-7z" fill="#e9e4e0"/></symbol>
    <symbol id="pc" viewBox="0 0 30 30"><path d="M8 1l20 7v14L8 16z" fill="#5a7c95"/><path d="M9 3l18 6v11L9 15z" fill="#3db4f5"/><path d="M13 20l8 2-2 3-7-2zM1 21l16 5-3 3-14-5z" fill="#dce3e8" stroke="#8d9aa5" stroke-width=".7"/><path d="M3 22l12 4M2 24l12 3" stroke="#8d9aa5" stroke-width=".7"/></symbol>
    <symbol id="chrome" viewBox="0 0 28 28"><circle cx="14" cy="14" r="14" fill="#fbc116"/><path d="M2 7a14 14 0 0 1 24.500 1H14l-5 9z" fill="#e33b2e"/><path d="M2 7a14 14 0 0 0 11 21l6-10-10-1z" fill="#2da94f"/><circle cx="14" cy="14" r="6.500" fill="#fff"/><circle cx="14" cy="14" r="5" fill="#2a73e8"/></symbol>
    <symbol id="folder" viewBox="0 0 28 26"><path d="M1 1h10l2 3-2 3H1z" fill="#e39f12"/><path d="M1 5h26v19H1z" fill="#ffd560"/><path d="M5 25V14h18v11h-5v-5h-8v5z" fill="#3f97dd"/></symbol>
    <symbol id="calc" viewBox="0 0 30 30"><path d="M5 3h17l6 6v20H5z" fill="#fdfdf5" stroke="#3e4b33"/><path d="M5 8h6v21H5z" fill="#2c3e46"/><path d="M21 2c5 1 7 3 7 8h-7z" fill="#a6c81f"/><path d="M0 9c4-5 8-4 10-2 3-5 8-7 15-6-7 1-10 4-12 9-3-3-8-3-13-1z" fill="#dfe9ef" stroke="#4b6777"/><path d="M13 14h14v13H13z" fill="#8fae12"/><path d="M15 17h4v3h-4zM21 17h4v3h-4zM15 22h4v3h-4zM21 22h4v3h-4z" fill="#fff"/></symbol>
    <symbol id="people" viewBox="0 0 20 20"><g fill="none" stroke="#000" stroke-width="1.300"><circle cx="13" cy="4" r="3.500"/><circle cx="6" cy="11" r="3.500"/><path d="M1 19c1-6 9-6 10 0M10 9c4-4 8-1 8 3"/></g></symbol>
    <symbol id="news" viewBox="0 0 30 20"><path d="M1 1h25v17H4q-3 0-3-3zM26 4h3v12q0 3-4 3H4" fill="none" stroke="#000" stroke-width="2"/><path d="M4 5h19M16 9h7M16 12h7M16 15h7M5 9h7v6H5z" fill="none" stroke="#000" stroke-width="1.600"/></symbol>
    <symbol id="tup" viewBox="0 0 18 20"><path d="M1 14l8-8 8 8" fill="none" stroke="#000" stroke-width="1.400"/></symbol>
    <symbol id="battery" viewBox="0 0 20 20"><path d="M1 5h16v10H1zM17 8h2v4h-2" fill="none" stroke="#000" stroke-width="1.300"/><path d="M3 7h8v6H3z"/></symbol>
    <symbol id="record" viewBox="0 0 20 20"><circle cx="10" cy="10" r="8" fill="none" stroke="#000" stroke-width="2"/><circle cx="10" cy="10" r="4"/></symbol>
    <symbol id="network" viewBox="0 0 20 20"><path d="M5 3h14v11H4V9M11 14v4M7 18h8M1 2h4v4H1zM3 6v3" fill="none" stroke="#000" stroke-width="1.300"/></symbol>
    <symbol id="sound" viewBox="0 0 20 20"><path d="M1 7h3l4-4v14l-4-4H1zM11 7q2 3 0 6M14 5q3 5 0 10" fill="none" stroke="#000" stroke-width="1.300"/><path d="M17 3q4 7 0 14" fill="none" stroke="#999"/></symbol>
    <symbol id="pen" viewBox="0 0 20 20"><path d="M8 15l3-9 4-5q3 0 2 3l-6 9zM8 15q-2 4-5 3c-3-3 1-7 5-6M11 13q3-5 8-5c1 2-3 3-5 5" fill="none" stroke="#000" stroke-width="1.300"/></symbol>
    <symbol id="action" viewBox="0 0 20 20"><path d="M11 16H1V1h18v9M11 19q-2-1 0-3M13 19c6 0 8-6 4-8 1 4-3 6-6 5z" fill="none" stroke="#000" stroke-width="1.300"/></symbol>
  </svg>

  <header class="titlebar" dir="ltr">
    <div class="grabber"><span></span></div>
    <svg class="title-icon"><use href="#writer"/></svg>
    <h1>‪ללא כותרת 1‬ - OpenOffice Writer</h1>
    <div class="win-buttons">
      <button aria-label="Minimize"><svg viewBox="0 0 12 12"><path d="M0 6h12" stroke="#000"/></svg></button>
      <button aria-label="Restore"><svg viewBox="0 0 12 12"><path d="M1 3h8v8.500H1zM3 3V1h8v8H9" fill="none" stroke="#000"/></svg></button>
      <button aria-label="Close"><svg viewBox="0 0 12 12"><path d="M0 0l12 12M12 0L0 12" stroke="#000" stroke-width="1.200"/></svg></button>
    </div>
  </header>

  <nav class="menu">
    <a href="#"><u>ק</u>ובץ</a>
    <a href="#"><u>ע</u>ריכה</a>
    <a href="#">ת<u>צ</u>וגה</a>
    <a href="#"><u>ה</u>וספה</a>
    <a href="#">עיצוב</a>
    <a href="#">טבלה</a>
    <a href="#"><u>כ</u>לים</a>
    <a href="#"><u>ח</u>לון</a>
    <a href="#"><u>ע</u>זרה</a>
  </nav>

  <div class="bar-row">
    <div class="toolbar">
      <span class="handle"></span>
      <button><svg><use href="#writer"/></svg></button><button class="drop"></button>
      <button><svg><use href="#open"/></svg></button><button class="drop"></button>
      <button><svg><use href="#save"/></svg></button>
      <button><svg><use href="#mail"/></svg></button>
      <i class="sep"></i>
      <button><svg><use href="#edit"/></svg></button>
      <i class="sep"></i>
      <button><svg><use href="#pdf"/></svg></button>
      <button><svg><use href="#print"/></svg></button>
      <button><svg><use href="#preview"/></svg></button>
      <i class="sep"></i>
      <button><svg><use href="#abccheck"/></svg></button>
      <button><svg><use href="#abcwave"/></svg></button>
      <i class="sep"></i>
      <button><svg><use href="#cut"/></svg></button>
      <button><svg><use href="#copy"/></svg></button>
      <button><svg><use href="#paste"/></svg></button><button class="drop"></button>
      <button><svg><use href="#brush"/></svg></button>
      <i class="sep"></i>
      <button><svg><use href="#undo"/></svg></button><button class="drop off"></button>
      <button><svg><use href="#redo"/></svg></button><button class="drop off"></button>
      <i class="sep"></i>
      <button><svg><use href="#globe"/></svg></button>
      <button><svg><use href="#table"/></svg></button><button class="drop"></button>
      <button class="on"><svg><use href="#draw"/></svg></button>
      <i class="sep"></i>
      <button><svg><use href="#find"/></svg></button>
      <button><svg><use href="#compass"/></svg></button>
      <button><svg><use href="#picture"/></svg></button>
      <button><svg><use href="#db"/></svg></button>
      <button><svg><use href="#pilcrow"/></svg></button>
      <button><svg><use href="#zoom"/></svg></button>
      <i class="sep"></i>
      <button><svg><use href="#help"/></svg></button>
      <button class="overflow"></button>
    </div>
    <div class="toolbar">
      <span class="handle"></span>
      <button><svg><use href="#down"/></svg></button>
      <button><svg><use href="#up"/></svg></button>
      <button class="overflow wide"></button>
    </div>
  </div>

  <div class="bar-row format-row">
    <div class="toolbar">
      <span class="handle"></span>
      <button><svg><use href="#styles"/></svg></button>
      <div class="combos">
        <div class="combo w-style"><svg><use href="#chev"/></svg><select aria-label="סגנון"><option>ברירת מחדל</option></select></div>
        <div class="combo w-font"><svg><use href="#chev"/></svg><select aria-label="גופן"><option>Tahoma</option></select></div>
        <div class="combo w-size"><svg><use href="#chev"/></svg><select aria-label="גודל"><option>12</option></select></div>
      </div>
      <button><svg><use href="#bold"/></svg></button>
      <button><svg><use href="#italic"/></svg></button>
      <button><svg><use href="#underline"/></svg></button>
      <i class="sep"></i>
      <button><svg><use href="#al"/></svg></button>
      <button><svg><use href="#ac"/></svg></button>
      <button class="on"><svg><use href="#ar"/></svg></button>
      <button><svg><use href="#aj"/></svg></button>
      <i class="sep"></i>
      <button><svg><use href="#ltr"/></svg></button>
      <button class="on"><svg><use href="#rtl"/></svg></button>
      <i class="sep"></i>
      <button><svg><use href="#numr"/></svg></button>
      <button><svg><use href="#bulr"/></svg></button>
      <button><svg><use href="#indin"/></svg></button>
      <button><svg><use href="#indout"/></svg></button>
      <i class="sep"></i>
      <button><svg><use href="#fontcolor"/></svg></button><button class="drop"></button>
      <button><svg><use href="#highlight"/></svg></button><button class="drop"></button>
      <button><svg><use href="#bucket"/></svg></button><button class="drop"></button>
      <button class="overflow wide"></button>
    </div>
  </div>

  <main class="work" dir="ltr">
    <aside class="sidebar">
      <div class="tabs">
        <button class="tab-menu"><svg viewBox="0 0 12 12"><path d="M0 1.500h8M0 4.500h8M0 7.500h6" stroke="#4d565e" stroke-width="1.300"/><path d="M5 8h7l-3 4z" fill="#1c2a3a"/></svg></button>
        <button class="tab current"><svg><use href="#cubes"/></svg></button>
        <button class="tab"><svg><use href="#clip"/></svg></button>
        <button class="tab"><svg><use href="#gallery"/></svg></button>
        <button class="tab"><svg><use href="#nav"/></svg></button>
      </div>
      <div class="deck" dir="rtl">
        <div class="deck-title"><h2>מאפיינים</h2><button aria-label="סגור"><svg viewBox="0 0 10 10"><path d="M0 0l10 10M10 0L0 10" stroke="#4a5a66" stroke-width="2"/></svg></button></div>

        <div class="section-head"><span class="fold minus"></span><h3>טקסט</h3><svg><use href="#panel"/></svg></div>
        <div class="section text-section">
          <div class="line combos">
            <div class="combo grow"><svg><use href="#chev"/></svg><select aria-label="גופן"><option>Tahoma</option></select></div>
            <div class="combo w-small"><svg><use href="#chev"/></svg><select aria-label="גודל"><option>12</option></select></div>
          </div>
          <div class="line">
            <div class="group">
              <button><svg><use href="#bold"/></svg></button><button><svg><use href="#italic"/></svg></button><button><svg><use href="#underline"/></svg></button><button class="drop"></button><button><svg><use href="#strike"/></svg></button><button><svg><use href="#shadow"/></svg></button>
            </div>
            <div class="group"><button><svg><use href="#grow"/></svg></button><button><svg><use href="#shrink"/></svg></button></div>
          </div>
          <div class="line loose">
            <div class="pair">
              <div class="group"><button><svg><use href="#super"/></svg></button><button><svg><use href="#sub"/></svg></button></div>
              <div class="group"><button><svg><use href="#spacing"/></svg></button><button class="drop"></button></div>
            </div>
            <div class="pair">
              <div class="group"><button><svg><use href="#fontcolor"/></svg></button><button class="drop"></button></div>
              <div class="group"><button><svg><use href="#highlight"/></svg></button><button class="drop"></button></div>
            </div>
          </div>
        </div>

        <div class="section-head"><span class="fold minus"></span><h3>פיסקה</h3><svg><use href="#panel"/></svg></div>
        <div class="section para-section">
          <div class="line">
            <div class="group"><button><svg><use href="#al"/></svg></button><button><svg><use href="#ac"/></svg></button><button class="on"><svg><use href="#ar"/></svg></button><button><svg><use href="#aj"/></svg></button></div>
          </div>
          <div class="line start">
            <div class="group"><button><svg><use href="#bull"/></svg></button><button class="drop"></button><button><svg><use href="#numl"/></svg></button><button class="drop"></button></div>
            <div class="group fill"><svg><use href="#box"/></svg><svg><use href="#bucketsmall"/></svg><button class="drop"></button></div>
          </div>
          <div class="halves">
            <span class="label"><u>ר</u>יווח:</span>
            <span class="label">ה<u>ז</u>חה:</span>
            <div class="group"><button><svg><use href="#paraup"/></svg></button><button><svg><use href="#paradn"/></svg></button></div>
            <div class="group"><button><svg><use href="#inc"/></svg></button><button><svg><use href="#dec"/></svg></button><button class="hang"><svg><use href="#hang"/></svg></button></div>
          </div>
          <div class="halves spins">
            <div class="field"><svg><use href="#sabove"/></svg><div class="spin"><span><button class="inc"></button><button class="decr"></button></span><input aria-label="מעל הפיסקה" value='0.00 ס"מ'></div></div>
            <div class="field"><svg><use href="#ibefore"/></svg><div class="spin"><span><button class="inc"></button><button class="decr"></button></span><input aria-label="לפני הטקסט" value='0.00 ס"מ'></div></div>
            <div class="field"><svg><use href="#sbelow"/></svg><div class="spin"><span><button class="inc"></button><button class="decr"></button></span><input aria-label="מתחת לפיסקה" value='0.00 ס"מ'></div></div>
            <div class="field"><svg><use href="#iafter"/></svg><div class="spin"><span><button class="inc"></button><button class="decr"></button></span><input aria-label="אחרי הטקסט" value='0.00 ס"מ'></div></div>
            <div class="group"><button><svg><use href="#linesp"/></svg></button><button class="drop"></button></div>
            <div class="field"><svg><use href="#ifirst"/></svg><div class="spin"><span><button class="inc"></button><button class="decr"></button></span><input aria-label="שורה ראשונה" value='0.00 ס"מ'></div></div>
          </div>
        </div>

        <div class="section-head closed"><span class="fold plus"></span><h3>עמוד</h3><svg><use href="#panel"/></svg></div>
      </div>
    </aside>

    <div class="splitter"><svg viewBox="0 0 6 44"><path d="M5 1v4L1 3zM5 40v4l-4-2z" fill="#444"/><path d="M2 11h3v2H2zM2 16h3v2H2zM2 21h3v2H2zM2 26h3v2H2zM2 31h3v2H2z" fill="#777"/></svg></div>

    <section class="editor">
      <div class="vscroll">
        <button class="flip"><svg><use href="#chevbold"/></svg></button>
        <div class="track"><div class="thumb"></div></div>
        <button><svg><use href="#chevbold"/></svg></button>
        <button class="jump"><svg viewBox="0 0 10 12"><path d="M5 0l5 5H0zM5 6l5 5H0z"/></svg></button>
        <button class="jump"><svg viewBox="0 0 12 12"><circle cx="6" cy="6" r="5" fill="#6ba4d2" stroke="#24506f" stroke-width="1.500"/><path d="M3 5h6M3 7h6" stroke="#2f6a96"/></svg></button>
        <button class="jump"><svg viewBox="0 0 10 12"><path d="M5 6L0 1h10zM5 12L0 7h10z"/></svg></button>
      </div>
      <div class="hruler"><svg id="hruler" width="1042" height="26"></svg></div>
      <div class="corner"><button aria-label="Tab"><svg viewBox="0 0 12 12"><path d="M9 1v8H2" fill="none" stroke="#000" stroke-width="3"/></svg></button></div>
      <div class="canvas">
        <div class="page"><div class="text-area"><span class="caret"></span></div></div>
      </div>
      <div class="vruler"><svg id="vruler" width="22" height="693"></svg></div>
      <div class="hscroll">
        <button class="to-left"><svg><use href="#chevbold"/></svg></button>
        <div class="thumb"></div>
        <button class="to-right"><svg><use href="#chevbold"/></svg></button>
      </div>
    </section>
  </main>

  <div class="bar-row draw-row">
    <div class="toolbar">
      <span class="handle"></span>
      <button><svg><use href="#cursor"/></svg></button>
      <i class="sep"></i>
      <button><svg><use href="#line"/></svg></button>
      <button><svg><use href="#rect"/></svg></button>
      <button><svg><use href="#ellipse"/></svg></button>
      <button><svg><use href="#freeform"/></svg></button>
      <button><svg><use href="#text"/></svg></button>
      <button><svg><use href="#callout"/></svg></button>
      <i class="sep"></i>
      <button><svg><use href="#diamond"/></svg></button><button class="drop"></button>
      <button><svg><use href="#smiley"/></svg></button><button class="drop"></button>
      <button><svg><use href="#arrows"/></svg></button><button class="drop"></button>
      <button><svg><use href="#flow"/></svg></button><button class="drop"></button>
      <button><svg><use href="#bubble"/></svg></button><button class="drop"></button>
      <button><svg><use href="#star"/></svg></button><button class="drop"></button>
      <i class="sep"></i>
      <button><svg><use href="#points"/></svg></button>
      <i class="sep"></i>
      <button><svg><use href="#fontwork"/></svg></button>
      <button><svg><use href="#fromfile"/></svg></button>
      <i class="sep"></i>
      <button><svg><use href="#extrude"/></svg></button>
      <button class="overflow"></button>
    </div>
  </div>

  <footer class="status">
    <span>עמוד 1 / 1</span>
    <span class="style-name">ברירת-מחדל</span>
    <span class="mid">עברית</span>
    <span class="mid">INSRT</span>
    <span class="mid">STD</span>
    <span></span>
    <span></span>
    <span></span>
    <span class="views"><svg class="v1"><use href="#v1"/></svg><svg class="v2"><use href="#v2"/></svg><svg class="v2"><use href="#v3"/></svg></span>
    <span class="zoombar"><svg><use href="#zout"/></svg><input type="range" min="0" max="100" value="50" aria-label="זום"><svg><use href="#zin"/></svg></span>
    <span class="percent">105 %</span>
  </footer>

  <div class="taskbar">
    <div class="apps">
      <button><svg class="s20"><use href="#win"/></svg></button>
      <button><svg class="s20"><use href="#tsearch"/></svg></button>
      <button><svg class="s24"><use href="#gear"/></svg></button>
      <button><svg><use href="#osearch"/></svg></button>
      <button><svg><use href="#edge"/></svg></button>
      <button><svg><use href="#pc"/></svg></button>
      <button class="running"><svg><use href="#chrome"/></svg></button>
      <button class="running"><svg><use href="#folder"/></svg></button>
      <button class="running active"><svg><use href="#calc"/></svg></button>
    </div>
    <div class="people"><button><svg><use href="#people"/></svg></button></div>
    <div class="tray">
      <button class="news"><svg><use href="#news"/></svg></button>
      <button><svg><use href="#tup"/></svg></button>
      <button><svg><use href="#battery"/></svg></button>
      <button><svg><use href="#record"/></svg></button>
      <button><svg><use href="#network"/></svg></button>
      <button><svg><use href="#sound"/></svg></button>
      <button class="ink"><svg><use href="#pen"/></svg></button>
      <span class="lang">עבר</span>
      <div class="clock">19:07<br>26/04/2022</div>
      <button class="action"><svg><use href="#action"/></svg></button>
    </div>
  </div>

  <svg class="stamp" viewBox="0 0 180 152" aria-hidden="true">
    <defs><clipPath id="outside-band"><path d="M-90-90h180v67.500h-180zM-90 22.500h180v68h-180z" transform="rotate(-15)"/></clipPath></defs>
    <g transform="translate(87 76)">
      <g clip-path="url(#outside-band)">
        <circle r="71" fill="none" stroke="#000" stroke-width="7"/>
        <circle r="62.500" fill="none" stroke="#000" stroke-width="2"/>
        <circle r="55"/>
      </g>
      <g transform="rotate(-15)">
        <text y="-28" class="stamp-he">מחשב</text>
        <text y="46" class="stamp-he">מוגן</text>
        <text x="-54" y="12" class="stamp-en">NET<tspan class="thin">FREE</tspan></text>
      </g>
      <path d="M-84 10l8-5h14l6 4-1 15-3 9-4 1q-10-2-13-9z"/>
      <path d="M-87 12q12-2 18 8 6-10 14-8M-84 19q10-2 15 5 5-7 12-6M-69 20v14" fill="none" stroke="#fff" stroke-width="1.200"/>
    </g>
  </svg>

  <script src="script.js"></script>
</body>

</html>
```
FILE: styles.css
```css
* {
	box-sizing: border-box;
	margin: 0;
	padding: 0;
}

body {
	height: 100vh;
	display: flex;
	flex-direction: column;
	overflow: hidden;
	background: #fff;
	color: #111;
	font-family: "Open Sans", "Liberation Sans", sans-serif;
	font-size: 14px;
	line-height: 20px;
}

button,
input,
select {
	font: inherit;
	color: inherit;
	border: 0;
	background: transparent;
}

button {
	display: flex;
	align-items: center;
	justify-content: center;
}

svg {
	display: block;
	flex: none;
}

a {
	color: inherit;
	text-decoration: none;
}

.sprite {
	display: none;
}

.gradients {
	position: absolute;
}

/* text inside icons */
.i-pdf, .i-abc, .i-help, .i-b, .i-ab, .i-strike, .i-n, .i-fw {
	text-anchor: middle;
	direction: ltr;
	font-weight: 700;
}

.i-pdf { font-size: 6px; fill: #fff; }
.i-abc { font-size: 9px; fill: #2b3d4d; }
.i-help { font-size: 17px; fill: #fff; }
.i-b { font-size: 20px; fill: #2c3e50; }
.i-ab { font-size: 11px; font-weight: 400; fill: #222; }
.i-strike { font-size: 9px; font-weight: 600; fill: #444; }
.i-n { font-size: 8px; font-weight: 400; fill: #333; }
.i-fw { font-size: 9px; fill: #28455f; }

/* title bar */
.titlebar {
	height: 30px;
	display: flex;
	align-items: center;
	padding: 0 3px 2px 4px;
	gap: 4px;
	flex: none;
}

.titlebar h1 {
	flex: 1;
	font-size: 15px;
	font-weight: 400;
}

.title-icon {
	width: 19px;
	height: 20px;
}

.grabber {
	position: absolute;
	top: 0;
	left: 50%;
	width: 302px;
	height: 1px;
	margin-left: -151px;
	background: #e4e4e4;
}

.grabber span {
	display: block;
	width: 60px;
	height: 1px;
	margin: 0 auto;
	background: #e3008c;
}

.win-buttons {
	display: flex;
}

.win-buttons button {
	width: 58px;
	height: 28px;
}

.win-buttons svg {
	width: 12px;
	height: 12px;
}

.menu {
	display: flex;
	gap: 14px;
	height: 28px;
	padding: 3px 5px 0 0;
	border-bottom: 2px solid #e8e8e8;
	font-size: 17px;
	flex: none;
}

.menu u,
.label u {
	text-underline-offset: 3px;
}

/* toolbars */
.bar-row {
	display: flex;
	height: 39px;
	border-bottom: 1px solid #cfcfcf;
	flex: none;
}

.format-row {
	height: 38px;
	border-bottom: 0;
}

.draw-row {
	height: 39px;
	border-bottom: 2px solid #bcbcbc;
}

.toolbar {
	display: flex;
	align-items: center;
	padding-right: 4px;
	border-left: 1px solid #cfcfcf;
}

.toolbar button {
	width: 31px;
	height: 33px;
}

.toolbar svg,
.group svg {
	width: 20px;
	height: 20px;
}

.toolbar .on,
.group .on {
	background: #cce6fd;
	border: 1px solid #98cff8;
}

.handle {
	width: 2px;
	height: 24px;
	margin: 0 2px 0 6px;
	background: repeating-linear-gradient(#999 0 2px, transparent 2px 4px);
}

.sep {
	width: 1px;
	height: 18px;
	margin: 0 5px;
	background: #c6c6c6;
}

.toolbar .drop,
.group .drop {
	width: 14px;
}

.drop::before,
.overflow::before {
	content: "";
	border: 4px solid transparent;
	border-top: 4px solid #000;
	border-bottom: 0;
}

.drop.off::before {
	border-top-color: #999;
}

.toolbar .overflow {
	width: 12px;
	height: 31px;
	margin: 4px 6px 0 1px;
	padding-bottom: 4px;
	align-items: flex-end;
	background: linear-gradient(#f2f2f2, #9c9c9c);
}

.toolbar .overflow.wide {
	margin-right: 9px;
}

.combos {
	display: flex;
	gap: 10px;
}

.toolbar .combos {
	margin: 0 11px;
}

.combo {
	direction: ltr;
	display: flex;
	align-items: center;
	height: 29px;
	padding: 2px;
	border: 1px solid #abadb3;
	background: #fff;
}

.combo svg {
	width: 21px;
	height: 23px;
	padding: 7px 4px;
	border: 1px solid #adadad;
	background: #e1e1e1;
}

.combo select {
	flex: 1;
	width: 0;
	height: 23px;
	padding-left: 2px;
	appearance: none;
	outline: none;
}

.w-style { width: 186px; }
.w-font { width: 208px; }
.w-size { width: 83px; }
.w-small { width: 70px; }
.grow { flex: 1; }

/* work area */
.work {
	flex: 1;
	min-height: 0;
	display: flex;
	padding: 0 2px 0 2px;
	border-top: 1px solid #a0a0a0;
	background: #efefef;
}

.sidebar {
	width: 368px;
	display: flex;
	padding: 4px 4px 4px 0;
	border: 1px solid #a6a6a6;
	flex: none;
}

.tabs {
	width: 47px;
	display: flex;
	flex-direction: column;
	align-items: center;
	gap: 4px;
}

.tab-menu {
	width: 30px;
	height: 43px;
	border-bottom: 1px solid #dcdcdc;
}

.tab-menu svg {
	width: 12px;
	height: 12px;
}

.tab {
	width: 40px;
	height: 40px;
	margin-right: 3px;
}

.tab.current {
	border: 1px solid #b0b0b0;
	border-radius: 4px;
}

.tab svg {
	width: 28px;
	height: 30px;
}

.deck {
	flex: 1;
	border: 1px solid #e0e0e0;
}

.deck-title {
	display: flex;
	justify-content: space-between;
	align-items: center;
	height: 33px;
	padding: 0 13px 2px 6px;
}

.deck-title h2,
.section-head h3 {
	font-size: 16px;
	font-weight: 700;
}

.deck-title svg {
	width: 10px;
	height: 10px;
}

.section-head {
	display: flex;
	align-items: center;
	gap: 7px;
	height: 34px;
	padding: 0 7px 0 6px;
	background: linear-gradient(#dfdfdf, #efefef);
}

.section-head h3 {
	flex: 1;
	color: #222;
}

.section-head svg {
	width: 14px;
	height: 13px;
	margin-bottom: 8px;
}

.closed {
	border-bottom: 1px solid #dedede;
}

.fold {
	width: 11px;
	height: 11px;
	border: 1px solid #6f8190;
	background: linear-gradient(#2c3e50, #2c3e50) center / 5px 1px no-repeat, #f8fafc;
}

.fold.plus {
	background: linear-gradient(#2c3e50, #2c3e50) center / 5px 1px no-repeat, linear-gradient(#2c3e50, #2c3e50) center / 1px 5px no-repeat, #f8fafc;
}

.section {
	display: flex;
	flex-direction: column;
	padding: 1px 9px 5px;
}

.text-section {
	gap: 13px;
}

.para-section {
	gap: 6px;
	padding: 0 9px 19px;
}

.line {
	display: flex;
	justify-content: space-between;
}

.line.start {
	justify-content: flex-start;
	gap: 32px;
}

.section .combos {
	gap: 9px;
	margin-bottom: -2px;
}

.loose {
	padding-left: 22px;
}

.pair {
	display: flex;
	gap: 13px;
}

.group {
	display: flex;
	align-items: center;
	width: fit-content;
	height: 38px;
	padding: 2px;
	border: 1px solid #e2e2e2;
	background: linear-gradient(#f0f0f0, #fff);
}

.group button {
	width: 31px;
	height: 32px;
}

.group .hang {
	width: 38px;
}

.group .hang svg {
	width: 26px;
}

.group.fill {
	padding-right: 4px;
}

.group.fill .drop {
	width: 21px;
}

.halves {
	display: grid;
	grid-template-columns: 1fr 139px;
	gap: 2px 8px;
	margin-top: -3px;
}

.label {
	height: 20px;
	font-size: 16px;
	color: #333;
}

.spins {
	margin-top: 8px;
	row-gap: 11px;
}

.spins .group {
	margin-top: -2px;
	margin-bottom: -10px;
}

.field {
	display: flex;
	align-items: center;
	gap: 9px;
	height: 29px;
}

.field > svg {
	width: 19px;
	height: 19px;
}

.spin {
	direction: ltr;
	display: flex;
	flex: 1;
	height: 29px;
	padding: 2px;
	border: 1px solid #abadb3;
	background: #fff;
}

.spin span {
	display: flex;
	flex-direction: column;
	width: 18px;
}

.spin button {
	flex: 1;
	border: 1px solid #bdbdbd;
	background: #f0f0f0;
}

.spin button::before {
	content: "";
	border: 4px solid transparent;
}

.spin .inc::before {
	border-bottom: 4px solid #000;
	border-top: 0;
}

.spin .decr::before {
	border-top: 4px solid #000;
	border-bottom: 0;
}

.spin input {
	flex: 1;
	width: 0;
	padding-left: 4px;
}

.splitter {
	width: 8px;
	display: flex;
	align-items: center;
	justify-content: center;
	flex: none;
	border-right: 1px solid #fff;
}

.splitter svg {
	width: 5px;
	height: 44px;
	margin-bottom: 4px;
}

/* editor */
.editor {
	flex: 1;
	min-width: 0;
	display: grid;
	grid-template-columns: 22px 1fr 32px;
	grid-template-rows: 34px 1fr 23px;
	border-top: 1px solid #8a8a8a;
	border-right: 1px solid #999;
}

.vscroll {
	grid-row: 1 / 4;
	display: flex;
	flex-direction: column;
	align-items: center;
	gap: 3px;
	padding: 1px 0 24px;
}

.vscroll button {
	width: 19px;
	height: 18px;
}

.vscroll svg,
.hscroll svg {
	width: 10px;
	height: 7px;
}

.flip svg {
	transform: rotate(180deg);
}

.vscroll .jump {
	height: 18px;
	border: 1px solid #a9a9a9;
	background: #e1e1e1;
}

.vscroll .jump svg {
	width: 12px;
	height: 12px;
}

.track {
	flex: 1;
	width: 19px;
}

.track .thumb {
	height: 49%;
	background: #cdcdcd;
}

.hruler {
	display: flex;
	justify-content: center;
	padding: 3px 3px 0 0;
	background: linear-gradient(#222, #222) 32px 32px / 100% 2px no-repeat;
}

.corner {
	display: flex;
	justify-content: center;
	padding: 5px 0 0 6px;
	border-bottom: 2px solid #222;
}

.corner button {
	width: 22px;
	height: 22px;
	border: 1px solid #aaa;
	background: #fafafa;
}

.corner svg {
	width: 12px;
	height: 12px;
}

.canvas {
	display: flex;
	justify-content: center;
	overflow: hidden;
	padding-top: 49px;
	background: #ababab;
	border-right: 1px solid #222;
}

.page {
	width: 1044px;
	padding: 100px 99px 0;
	border: 1px solid #222;
	border-bottom: 0;
	background: #fff;
	box-shadow: 3px 2px 0 #000;
}

.text-area {
	height: 100%;
	border: 1px solid #cfcfcf;
	border-bottom: 0;
}

.caret {
	display: block;
	width: 1px;
	height: 22px;
	margin-left: auto;
	background: #555;
}

.vruler {
	padding: 49px 0 0 6px;
	overflow: hidden;
}

.hruler text,
.vruler text {
	font-size: 14px;
	text-anchor: middle;
	fill: #222;
}

.hscroll {
	grid-column: 2 / 4;
	display: flex;
	align-items: center;
	border-bottom: 1px solid #e2e2e2;
}

.hscroll button {
	width: 21px;
}

.hscroll .thumb {
	flex: 1;
	height: 19px;
	background: #cdcdcd;
}

.to-left svg {
	transform: rotate(90deg);
}

.to-right svg {
	transform: rotate(-90deg);
}

/* status bar */
.status {
	display: grid;
	grid-template-columns: 339fr 355fr 311fr 56px 41px 20px 36px 431fr 95px 179px 57px;
	height: 27px;
	padding-top: 5px;
	background: #efefef;
	color: #222;
	flex: none;
}

.status span {
	height: 20px;
	padding: 0 12px 0 0;
	border-right: 1px solid #9c9c9c;
}

.status span:first-child {
	border: 0;
}

.status .style-name {
	padding-right: 6px;
	font-size: 16px;
}

.status .mid {
	padding: 0;
	text-align: center;
}

.status .percent {
	padding-right: 5px;
}

.status .views,
.status .zoombar {
	display: flex;
	align-items: center;
	gap: 7px;
	padding-right: 9px;
}

.views .v1 {
	width: 12px;
	height: 14px;
}

.views .v2 {
	width: 23px;
	height: 14px;
}

.zoombar svg {
	width: 15px;
	height: 15px;
}

.status .zoombar {
	padding-right: 7px;
	gap: 5px;
}

.zoombar input {
	width: 121px;
	height: 14px;
	appearance: none;
	background: linear-gradient(#888, #888) 97px 0 / 1px 14px no-repeat, linear-gradient(#a8a8a8, #a8a8a8) 0 6px / 100% 2px no-repeat;
}

.zoombar input::-webkit-slider-thumb {
	appearance: none;
	width: 10px;
	height: 12px;
	border: 1px solid #24506f;
	border-radius: 5px;
	background: #4f84a8;
}

/* taskbar */
.taskbar {
	display: flex;
	height: 50px;
	flex: none;
	background: linear-gradient(90deg, #e7e9ee, #e5e9ec 9%, #ebe9dd 17%, #ebe9dd 26%, #e9eae6 36%, #eae9e4 50%, #e0dfdf 62%, #d3dce6 70%, #d5dbe2 77%, #d9dad9 81%, #eaddd0 84%, #ede0d3);
}

.taskbar button {
	height: 50px;
}

.apps {
	display: flex;
}

.apps button {
	width: 62px;
	border-bottom: 3px solid transparent;
}

.apps svg {
	width: 30px;
	height: 30px;
}

.apps .s20 { width: 22px; height: 20px; }
.apps .s24 { width: 24px; height: 24px; }

.apps .running {
	background: linear-gradient(#e3008c, #e3008c) center bottom / 51px 3px no-repeat border-box;
}

.apps .active {
	background: linear-gradient(#e3008c, #e3008c) center bottom / 100% 3px no-repeat border-box, #edf1f4;
}

.people {
	flex: 1;
	display: flex;
	justify-content: flex-end;
	padding-left: 201px;
}

.people button {
	width: 40px;
}

.people svg,
.tray svg {
	width: 20px;
	height: 20px;
}

.tray {
	display: flex;
	align-items: center;
	width: 447px;
	border-left: 1px solid #c0c2c6;
	margin-left: 5px;
	flex: none;
}

.tray button {
	width: 30px;
}

.tray .news {
	width: 59px;
}

.tray .news svg {
	width: 30px;
}

.tray .ink {
	width: 40px;
}

.lang {
	width: 43px;
	text-align: center;
}

.clock {
	width: 96px;
	text-align: center;
	line-height: 23px;
}

.tray .action {
	width: 44px;
}

/* stamp over the sidebar corner */
.stamp {
	position: absolute;
	left: 31px;
	bottom: 87px;
	width: 180px;
	height: 152px;
	opacity: .13;
	pointer-events: none;
}

.stamp text {
	direction: ltr;
}

.stamp-he {
	font-size: 24px;
	font-weight: 800;
	text-anchor: middle;
	fill: #fff;
}

.stamp-en {
	font-family: Lato, sans-serif;
	font-size: 33px;
}

.thin {
	font-weight: 300;
}
```
FILE: script.js
```js
const NS = 'http://www.w3.org/2000/svg';

function add(parent, name, attrs, text) {
  const el = document.createElementNS(NS, name);
  for (const key in attrs) {
    el.setAttribute(key, attrs[key]);
  }
  if (text !== undefined) {
    el.textContent = text;
  }
  parent.appendChild(el);
}

// horizontal ruler: zero is at the right margin, numbers grow to the left
function drawHorizontal(svg) {
  const cm = 842 / 17;
  const zero = 942;
  add(svg, 'rect', { x: 100, y: 2, width: 843, height: 21, fill: '#fff' });
  add(svg, 'rect', { x: 0.5, y: 1.5, width: 99, height: 21, fill: '#efefef', stroke: '#a0a0a0' });
  add(svg, 'rect', { x: 942.5, y: 1.5, width: 99, height: 21, fill: '#efefef', stroke: '#a0a0a0' });
  for (let q = -7; q < 75; q++) {
    const x = Math.round(zero - q * cm / 4);
    if (q % 4 === 0) {
      if (q !== 0) {
        add(svg, 'text', { x: x - 1, y: 18 }, Math.abs(q / 4));
      }
    } else {
      const h = q % 2 === 0 ? 4 : 1;
      add(svg, 'rect', { x: x, y: 13 - h / 2 | 0, width: 1, height: h, fill: '#111' });
    }
  }
  // default tab stops
  for (let t = 1; t < 14; t++) {
    const x = Math.round(zero - t * 62.4);
    add(svg, 'path', { d: `M${x - 3} 24h7M${x + 0.5} 20v4`, stroke: '#111' });
  }
  add(svg, 'path', { d: 'M936 2h13v2l-5 7v3l5 7v3h-13v-3l5-7v-3l-5-7z', fill: '#fff', stroke: '#777' });
  add(svg, 'path', { d: 'M99.5 2v12l5 6v4h-11v-4l6-6', fill: '#fff', stroke: '#777' });
}

function drawVertical(svg) {
  const cm = 49.7;
  const zero = 99;
  add(svg, 'rect', { x: 1, y: 100, width: 21, height: 593, fill: '#fff' });
  add(svg, 'rect', { x: 0.5, y: 0.5, width: 21, height: 98, fill: '#efefef', stroke: '#a0a0a0' });
  for (let q = -7; q < 50; q++) {
    const y = Math.round(zero + q * cm / 4);
    if (q % 4 === 0) {
      if (q !== 0) {
        add(svg, 'text', { transform: `translate(18 ${y}) rotate(-90)` }, Math.abs(q / 4));
      }
    } else {
      const w = q % 2 === 0 ? 4 : 1;
      add(svg, 'rect', { x: 11 - w / 2 | 0, y: y, width: w, height: 1, fill: '#111' });
    }
  }
}

drawHorizontal(document.getElementById('hruler'));
drawVertical(document.getElementById('vruler'));
```
